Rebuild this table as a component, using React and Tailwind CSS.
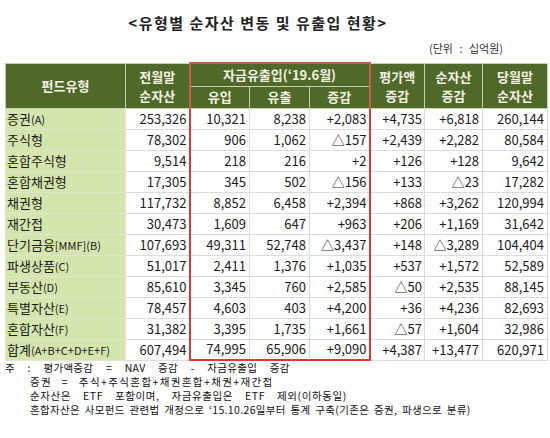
import React from "react";

const rows = [
  ["증권", "(A)", "253,326", "10,321", "8,238", "+2,083", "+4,735", "+6,818", "260,144"],
  ["주식형", "", "78,302", "906", "1,062", "△157", "+2,439", "+2,282", "80,584"],
  ["혼합주식형", "", "9,514", "218", "216", "+2", "+126", "+128", "9,642"],
  ["혼합채권형", "", "17,305", "345", "502", "△156", "+133", "△23", "17,282"],
  ["채권형", "", "117,732", "8,852", "6,458", "+2,394", "+868", "+3,262", "120,994"],
  ["재간접", "", "30,473", "1,609", "647", "+963", "+206", "+1,169", "31,642"],
  ["단기금융", "[MMF](B)", "107,693", "49,311", "52,748", "△3,437", "+148", "△3,289", "104,404"],
  ["파생상품", "(C)", "51,017", "2,411", "1,376", "+1,035", "+537", "+1,572", "52,589"],
  ["부동산", "(D)", "85,610", "3,345", "760", "+2,585", "△50", "+2,535", "88,145"],
  ["특별자산", "(E)", "78,457", "4,603", "403", "+4,200", "+36", "+4,236", "82,693"],
  ["혼합자산", "(F)", "31,382", "3,395", "1,735", "+1,661", "△57", "+1,604", "32,986"],
  ["합계", "(A+B+C+D+E+F)", "607,494", "74,995", "65,906", "+9,090", "+4,387", "+13,477", "620,971"],
];

const font = { fontFamily: '"Noto Sans CJK KR", "Noto Sans", sans-serif' };

export default function App() {
  return (
    <div
      className="w-[550px] h-[438px] bg-white text-[#1a1a1a] overflow-hidden"
      style={font}
    >
      {/* title */}
      <div className="pt-[12px] h-[33px] pr-[34px] text-center text-[15px] leading-[21px] font-bold tracking-[1.5px] text-[#222]">
        &lt;유형별 순자산 변동 및 유출입 현황&gt;
      </div>
      <div className="mt-[8px] h-[14px] pr-[47px] text-right text-[11px] leading-[14px] text-[#333] [word-spacing:4px]">
        (단위 : 십억원)
      </div>

      {/* table */}
      <table className="mt-[7px] ml-[5px] border-collapse table-fixed text-[13px]">
        <colgroup>
          <col className="w-[120px]" />
          <col className="w-[64px]" />
          <col className="w-[60px]" />
          <col className="w-[60px]" />
          <col className="w-[60px]" />
          <col className="w-[55px]" />
          <col className="w-[58px]" />
          <col className="w-[65px]" />
        </colgroup>
        <thead className="bg-[#4f6a28] text-[#f4f1e6] font-bold text-[13px]">
          <tr className="h-[23px]">
            <th rowSpan={2} className="border border-[#c9d3b4] leading-[16px]">
              펀드유형
            </th>
            <th rowSpan={2} className="border border-[#c9d3b4] leading-[19px]">
              전월말
              <br />
              순자산
            </th>
            <th
              colSpan={3}
              className="border-2 border-[#d0584c] border-b border-b-[#c9d3b4] leading-[16px]"
            >
              자금유출입(‘19.6월)
            </th>
            <th rowSpan={2} className="border border-[#c9d3b4] leading-[19px]">
              평가액
              <br />
              증감
            </th>
            <th rowSpan={2} className="border border-[#c9d3b4] leading-[19px]">
              순자산
              <br />
              증감
            </th>
            <th rowSpan={2} className="border border-[#c9d3b4] leading-[19px]">
              당월말
              <br />
              순자산
            </th>
          </tr>
          <tr className="h-[22px]">
            <th className="border border-[#c9d3b4] border-l-2 border-l-[#d0584c] leading-[16px]">
              유입
            </th>
            <th className="border border-[#c9d3b4] leading-[16px]">유출</th>
            <th className="border border-[#c9d3b4] border-r-2 border-r-[#d0584c] leading-[16px]">
              증감
            </th>
          </tr>
        </thead>
        <tbody>
          {rows.map((r, i) => {
            const last = i === rows.length - 1;
            return (
              <tr key={i} className="h-[21px]">
                <td className="bg-[#d5e5ae] border border-[#dfe6cf] pl-[1px] whitespace-nowrap leading-[16px]">
                  <span className="text-[13px]">{r[0]}</span>
                  <span className="text-[11px]">{r[1]}</span>
                </td>
                <td className="border border-[#dcdcdc] text-right pr-[2px] leading-[16px]">
                  {r[2]}
                </td>
                <td
                  className={`border border-[#dcdcdc] border-l-2 border-l-[#d93a33] text-right pr-[3px] leading-[16px] ${
                    last ? "border-b-2 border-b-[#d93a33]" : ""
                  }`}
                >
                  {r[3]}
                </td>
                <td
                  className={`border border-[#dcdcdc] text-right pr-[3px] leading-[16px] ${
                    last ? "border-b-2 border-b-[#d93a33]" : ""
                  }`}
                >
                  {r[4]}
                </td>
                <td
                  className={`border border-[#dcdcdc] border-r-2 border-r-[#d93a33] text-right pr-[2px] leading-[16px] ${
                    last ? "border-b-2 border-b-[#d93a33]" : ""
                  }`}
                >
                  {r[5]}
                </td>
                <td className="border border-[#dcdcdc] text-right pr-[2px] leading-[16px]">
                  {r[6]}
                </td>
                <td className="border border-[#dcdcdc] text-right pr-[3px] leading-[16px]">
                  {r[7]}
                </td>
                <td className="border border-[#dcdcdc] text-right pr-[3px] leading-[16px]">
                  {r[8]}
                </td>
              </tr>
            );
          })}
        </tbody>
      </table>

      {/* notes */}
      <div className="pl-[5px] text-[10.5px] leading-[14px] text-[#111]">
        <div className="[word-spacing:10px] tracking-[0.3px]">
          주 : 평가액증감 = NAV 증감 - 자금유출입 증감
        </div>
        <div className="pl-[25px] [word-spacing:6px] tracking-[1.4px]">
          증권 = 주식+주식혼합+채권혼합+채권+재간접
        </div>
        <div className="pl-[25px] [word-spacing:9px] tracking-[0.6px]">
          순자산은 ETF 포함이며, 자금유출입은 ETF 제외(이하동일)
        </div>
        <div className="pl-[25px] whitespace-nowrap [word-spacing:2px] tracking-[0.35px]">
          혼합자산은 사모펀드 관련법 개정으로 ‘15.10.26일부터 통계 구축(기존은 증권, 파생으로 분류)
        </div>
      </div>
    </div>
  );
}
